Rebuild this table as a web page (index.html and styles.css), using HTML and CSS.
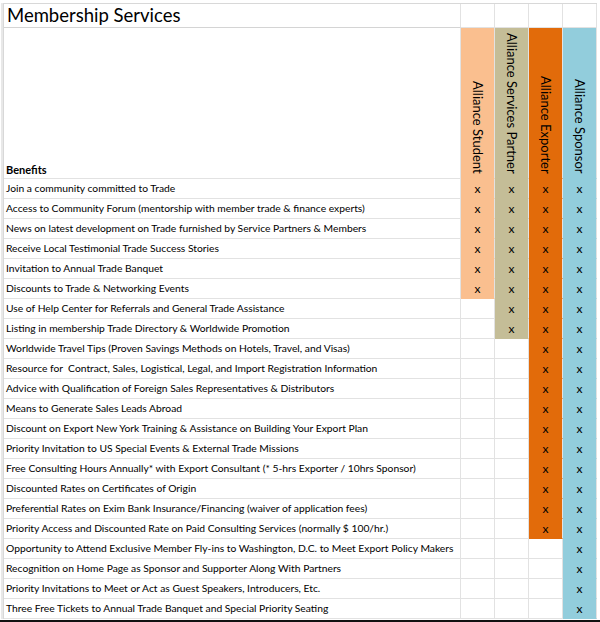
FILE: index.html
```html
<!DOCTYPE html>
<html>
<head>
<meta charset="utf-8">
<link rel="stylesheet" href="styles.css">
</head>
<body>
<div class="sheet">
  <div class="c title">Membership Services</div><div class="c"></div><div class="c"></div><div class="c"></div><div class="c"></div>
  <div class="c benefits">Benefits</div>
  <div class="c hd stu"><span>Alliance Student</span></div>
  <div class="c hd par"><span>Alliance Services Partner</span></div>
  <div class="c hd exp"><span>Alliance Exporter</span></div>
  <div class="c hd spo"><span>Alliance Sponsor</span></div>

  <div class="c lbl">Join a community committed to Trade</div><div class="c x stu">x</div><div class="c x par">x</div><div class="c x exp">x</div><div class="c x spo">x</div>
  <div class="c lbl">Access to Community Forum (mentorship with member trade &amp; finance experts)</div><div class="c x stu">x</div><div class="c x par">x</div><div class="c x exp">x</div><div class="c x spo">x</div>
  <div class="c lbl">News on latest development on Trade furnished by Service Partners &amp; Members</div><div class="c x stu">x</div><div class="c x par">x</div><div class="c x exp">x</div><div class="c x spo">x</div>
  <div class="c lbl">Receive Local Testimonial Trade Success Stories</div><div class="c x stu">x</div><div class="c x par">x</div><div class="c x exp">x</div><div class="c x spo">x</div>
  <div class="c lbl">Invitation to Annual Trade Banquet</div><div class="c x stu">x</div><div class="c x par">x</div><div class="c x exp">x</div><div class="c x spo">x</div>
  <div class="c lbl">Discounts to Trade &amp; Networking Events</div><div class="c x stu">x</div><div class="c x par">x</div><div class="c x exp">x</div><div class="c x spo">x</div>
  <div class="c lbl">Use of Help Center for Referrals and General Trade Assistance</div><div class="c x"></div><div class="c x par">x</div><div class="c x exp">x</div><div class="c x spo">x</div>
  <div class="c lbl">Listing in membership Trade Directory &amp; Worldwide Promotion</div><div class="c x"></div><div class="c x par">x</div><div class="c x exp">x</div><div class="c x spo">x</div>
  <div class="c lbl">Worldwide Travel Tips (Proven Savings Methods on Hotels, Travel, and Visas)</div><div class="c x"></div><div class="c x"></div><div class="c x exp">x</div><div class="c x spo">x</div>
  <div class="c lbl">Resource for&nbsp; Contract, Sales, Logistical, Legal, and Import Registration Information</div><div class="c x"></div><div class="c x"></div><div class="c x exp">x</div><div class="c x spo">x</div>
  <div class="c lbl">Advice with Qualification of Foreign Sales Representatives &amp; Distributors</div><div class="c x"></div><div class="c x"></div><div class="c x exp">x</div><div class="c x spo">x</div>
  <div class="c lbl">Means to Generate Sales Leads Abroad</div><div class="c x"></div><div class="c x"></div><div class="c x exp">x</div><div class="c x spo">x</div>
  <div class="c lbl">Discount on Export New York Training &amp; Assistance on Building Your Export Plan</div><div class="c x"></div><div class="c x"></div><div class="c x exp">x</div><div class="c x spo">x</div>
  <div class="c lbl">Priority Invitation to US Special Events &amp; External Trade Missions</div><div class="c x"></div><div class="c x"></div><div class="c x exp">x</div><div class="c x spo">x</div>
  <div class="c lbl">Free Consulting Hours Annually* with Export Consultant (* 5-hrs Exporter / 10hrs Sponsor)</div><div class="c x"></div><div class="c x"></div><div class="c x exp">x</div><div class="c x spo">x</div>
  <div class="c lbl">Discounted Rates on Certificates of Origin</div><div class="c x"></div><div class="c x"></div><div class="c x exp">x</div><div class="c x spo">x</div>
  <div class="c lbl">Preferential Rates on Exim Bank Insurance/Financing (waiver of application fees)</div><div class="c x"></div><div class="c x"></div><div class="c x exp">x</div><div class="c x spo">x</div>
  <div class="c lbl">Priority Access and Discounted Rate on Paid Consulting Services (normally $ 100/hr.)</div><div class="c x"></div><div class="c x"></div><div class="c x exp">x</div><div class="c x spo">x</div>
  <div class="c lbl">Opportunity to Attend Exclusive Member Fly-ins to Washington, D.C. to Meet Export Policy Makers</div><div class="c x"></div><div class="c x"></div><div class="c x"></div><div class="c x spo">x</div>
  <div class="c lbl">Recognition on Home Page as Sponsor and Supporter Along With Partners</div><div class="c x"></div><div class="c x"></div><div class="c x"></div><div class="c x spo">x</div>
  <div class="c lbl">Priority Invitations to Meet or Act as Guest Speakers, Introducers, Etc.</div><div class="c x"></div><div class="c x"></div><div class="c x"></div><div class="c x spo">x</div>
  <div class="c lbl">Three Free Tickets to Annual Trade Banquet and Special Priority Seating</div><div class="c x"></div><div class="c x"></div><div class="c x"></div><div class="c x spo">x</div>
</div>
<div class="bottom-rule"></div>
</body>
</html>
```
FILE: styles.css
```css
html, body {
  margin: 0;
  padding: 0;
  background: #fff;
}
body {
  width: 600px;
  height: 622px;
  position: relative;
  overflow: hidden;
  font-family: Lato, "Open Sans", sans-serif;
  color: #111;
}
.sheet {
  margin: 3px 0 0 3px;
  display: grid;
  grid-template-columns: 457px 34px 34px 34px 34px;
  grid-template-rows: 24px 151px repeat(22, 20px);
  border-top: 1px solid #d8d8d8;
  border-left: 1px solid #d8d8d8;
  box-shadow: -2px 0 0 0 #e8e8e8;
  width: max-content;
}
.c {
  box-sizing: border-box;
  border-right: 1px solid #e2e2e2;
  border-bottom: 1px solid #e2e2e2;
  overflow: hidden;
  white-space: nowrap;
}
.title {
  font-size: 18.5px;
  line-height: 23px;
  padding-left: 3px;
  border-bottom-color: #d4d4d4;
  color: #000;
}
.benefits {
  font-weight: 700;
  font-size: 11px;
  display: flex;
  align-items: flex-end;
  padding: 0 0 2px 2px;
  color: #000;
}
.lbl {
  font-size: 10.3px;
  line-height: 19px;
  padding-left: 2px;
  color: #000;
}
.hd {
  display: flex;
  justify-content: center;
  align-items: flex-end;
  padding-bottom: 4px;
}
.hd span {
  writing-mode: vertical-rl;
  font-size: 13px;
  color: #000;
}
.x {
  font-size: 12px;
  line-height: 19px;
  text-align: center;
  color: #000;
}
.stu { background: #fabf8f; border-bottom-color: #fabf8f; }
.par { background: #c4bd97; border-bottom-color: #c4bd97; }
.exp { background: #e26b0a; border-bottom-color: #e26b0a; }
.spo { background: #92cddc; border-bottom-color: #92cddc; }
.bottom-rule {
  position: absolute;
  left: 0;
  right: 0;
  top: 620px;
  height: 2px;
  background: #111;
}
```
